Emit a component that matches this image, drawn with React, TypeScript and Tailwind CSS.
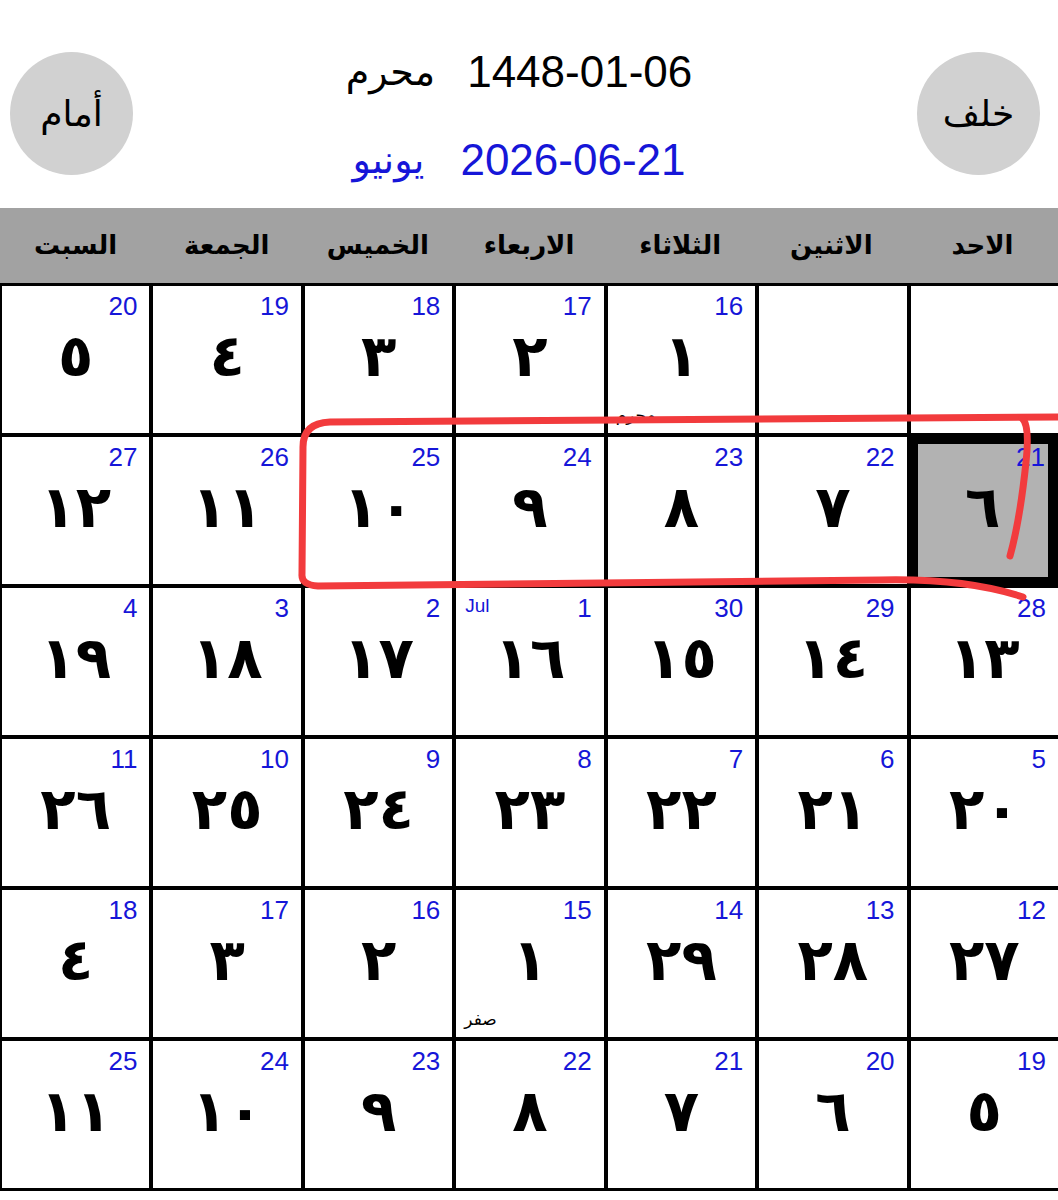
import React from 'react';

type Day = {
  g?: string;
  h?: string;
  month?: string;
  gMonth?: string;
  selected?: boolean;
};

const weekDays = ['الاحد', 'الاثنين', 'الثلاثاء', 'الاربعاء', 'الخميس', 'الجمعة', 'السبت'];

const weeks: Day[][] = [
  [{}, {}, { g: '16', h: '١', month: 'محرم' }, { g: '17', h: '٢' }, { g: '18', h: '٣' }, { g: '19', h: '٤' }, { g: '20', h: '٥' }],
  [{ g: '21', h: '٦', selected: true }, { g: '22', h: '٧' }, { g: '23', h: '٨' }, { g: '24', h: '٩' }, { g: '25', h: '١٠' }, { g: '26', h: '١١' }, { g: '27', h: '١٢' }],
  [{ g: '28', h: '١٣' }, { g: '29', h: '١٤' }, { g: '30', h: '١٥' }, { g: '1', h: '١٦', gMonth: 'Jul' }, { g: '2', h: '١٧' }, { g: '3', h: '١٨' }, { g: '4', h: '١٩' }],
  [{ g: '5', h: '٢٠' }, { g: '6', h: '٢١' }, { g: '7', h: '٢٢' }, { g: '8', h: '٢٣' }, { g: '9', h: '٢٤' }, { g: '10', h: '٢٥' }, { g: '11', h: '٢٦' }],
  [{ g: '12', h: '٢٧' }, { g: '13', h: '٢٨' }, { g: '14', h: '٢٩' }, { g: '15', h: '١', month: 'صفر' }, { g: '16', h: '٢' }, { g: '17', h: '٣' }, { g: '18', h: '٤' }],
  [{ g: '19', h: '٥' }, { g: '20', h: '٦' }, { g: '21', h: '٧' }, { g: '22', h: '٨' }, { g: '23', h: '٩' }, { g: '24', h: '١٠' }, { g: '25', h: '١١' }],
];

const font = { fontFamily: '"Liberation Sans", "DejaVu Sans", sans-serif' };

const DayCell = ({ day }: { day: Day }) => {
  return (
    <div
      className={
        day.selected
          ? 'relative flex h-[147px] items-center justify-center border-[7px] border-r-[10px] border-black bg-[#b2b2b2]'
          : 'relative flex h-[147px] items-center justify-center bg-white'
      }
    >
      {day.g && (
        <span
          dir="ltr"
          className={
            day.selected
              ? 'absolute top-[0px] right-[3px] text-[26px] leading-[26px] text-[#1616d8]'
              : 'absolute top-[7px] right-[12px] text-[26px] leading-[26px] text-[#1616d8]'
          }
        >
          {day.g}
        </span>
      )}
      {day.gMonth && (
        <span dir="ltr" className="absolute top-[8px] left-[9px] text-[19px] leading-[19px] text-[#1616d8]">
          {day.gMonth}
        </span>
      )}
      {day.h && <span className="mb-[8px] text-[58px] font-bold leading-none text-black">{day.h}</span>}
      {day.month && (
        <span className="absolute bottom-[8px] left-[8px] text-[17px] leading-[18px] text-black">{day.month}</span>
      )}
    </div>
  );
};

export default function App() {
  return (
    <div className="relative w-[1058px] bg-white pb-[8px]" style={font}>
      {/* Header */}
      <div className="flex h-[208px] items-start justify-between pl-[10px] pr-[18px]">
        <button className="mt-[52px] flex h-[123px] w-[123px] items-center justify-center rounded-full bg-[#d1d1d1] text-[36px] text-black">
          أمام
        </button>
        <div className="flex flex-1 flex-col items-center pt-[46px] pr-[12px]">
          <div className="flex items-center gap-[32px] leading-[52px] text-black">
            <span className="text-[38px]">محرم</span>
            <span className="text-[44px]">1448-01-06</span>
          </div>
          <div className="mt-[36px] flex items-center gap-[36px] leading-[52px] text-[#1616d8]">
            <span className="text-[38px]">يونيو</span>
            <span className="text-[44px]">2026-06-21</span>
          </div>
        </div>
        <button className="mt-[52px] flex h-[123px] w-[123px] items-center justify-center rounded-full bg-[#d1d1d1] text-[36px] text-black">
          خلف
        </button>
      </div>

      {/* Week days */}
      <div dir="rtl" className="grid h-[75px] grid-cols-7 items-center bg-[#a2a2a2]">
        {weekDays.map((d) => (
          <div key={d} className="text-center text-[26px] font-bold text-black">
            {d}
          </div>
        ))}
      </div>

      {/* Month grid */}
      <div dir="rtl" className="grid grid-cols-7 gap-[4px] bg-black pt-[3px] pb-[3px] pl-[2px]">
        {weeks.flat().map((day, i) => (
          <DayCell key={i} day={day} />
        ))}
      </div>

      {/* Hand-drawn marker */}
      <svg className="pointer-events-none absolute top-0 left-0" width="1058" height="1200" viewBox="0 0 1058 1200">
        <path
          d="M 1060 417 L 330 422 Q 303 423 303 447 L 302 574 Q 301 585 318 586 L 880 580 Q 965 578 1023 597"
          fill="none"
          stroke="#f23b3d"
          strokeWidth="7"
          strokeLinecap="round"
          strokeLinejoin="round"
        />
        <path
          d="M 1022 418 Q 1030 425 1026 462 Q 1020 520 1010 556"
          fill="none"
          stroke="#f23b3d"
          strokeWidth="7"
          strokeLinecap="round"
        />
      </svg>
    </div>
  );
}
